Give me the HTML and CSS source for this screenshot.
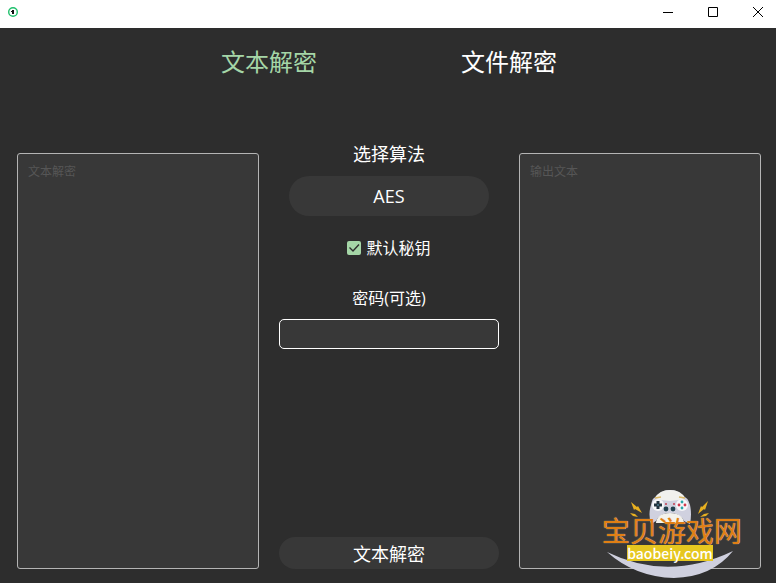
FILE: index.html
```html
<!DOCTYPE html>
<html lang="zh-CN">
<head>
    <meta charset="UTF-8">
    <meta name="viewport" content="width=device-width, initial-scale=1.0">
    <title>文本解密</title>
    <link rel="stylesheet" href="styles.css">
</head>
<body>
    <header class="titlebar">
        <svg class="app-icon" viewBox="0 0 12 12">
            <circle cx="6" cy="6" r="4.3" fill="#fff" stroke="#1fc06c" stroke-width="1.4"/>
            <path d="M5 4h2v4H5V6H4V5h1z" fill="#111"/>
        </svg>
        <div class="window-buttons">
            <button type="button" aria-label="最小化">
                <svg viewBox="0 0 12 12"><path d="M1 6.5h10"/></svg>
            </button>
            <button type="button" aria-label="最大化">
                <svg viewBox="0 0 12 12"><path d="M1.5 1.5h9v9h-9z"/></svg>
            </button>
            <button type="button" aria-label="关闭">
                <svg viewBox="0 0 12 12"><path d="M1 1l10 10M11 1L1 11"/></svg>
            </button>
        </div>
    </header>

    <nav class="tabs">
        <button type="button" class="tab active">文本解密</button>
        <button type="button" class="tab">文件解密</button>
    </nav>

    <main class="content">
        <textarea class="text-box" placeholder="文本解密" aria-label="文本解密"></textarea>

        <form class="options">
            <label class="title" for="algorithm">选择算法</label>
            <select id="algorithm" class="algorithm">
                <option>AES</option>
            </select>
            <label class="default-key">
                <input type="checkbox" checked>
                <span>默认秘钥</span>
            </label>
            <label class="password-label" for="password">密码(可选)</label>
            <input type="password" id="password" class="password">
            <button type="button" class="submit">文本解密</button>
        </form>

        <textarea class="text-box" placeholder="输出文本" aria-label="输出文本" readonly></textarea>
    </main>

    <div class="watermark">
        <svg class="watermark-art" viewBox="0 0 140 88">
            <!-- swoosh -->
            <path d="M5 62Q66 92 131 61Q110 87 72 88Q33 87 5 62z" fill="#cfd0de"/>
            <!-- sparks -->
            <g fill="#e8b020">
                <path d="M29 12l6 5 1-1 4 7-7-4-1 1z"/>
                <path d="M28 23l5 1 3 3-5-1z"/>
                <path d="M106 11l-6 6-1-1-3 8 6-5 1 1z"/>
                <path d="M107 23l-5 1-4 3 6-1z"/>
            </g>
            <!-- gamepad -->
            <path d="M49 15Q50 7 57 5Q60 0 68 0Q76 0 79 5Q86 7 88 15Q90 24 88 34L82 31Q78 23 68 23Q58 23 54 31L49 34Q46 24 49 15z" fill="#d0d1df"/>
            <path d="M53 8Q57 0 68 0Q79 0 83 8Q76 11 68 11Q60 11 53 8z" fill="#f1f1ee"/>
            <path d="M54 33Q55 23 68 23Q81 23 82 33z" fill="#f3f2ed"/>
            <path d="M53 8l6-1M77 7l6 1" stroke="#d8b765" stroke-width="1.4"/>
            <circle cx="56" cy="15" r="6" fill="#f7f7f9"/>
            <circle cx="80" cy="15" r="6" fill="#f7f7f9"/>
            <path d="M56 11v8M52 15h8" stroke="#22323e" stroke-width="3"/>
            <circle cx="56" cy="15" r="1" fill="#4a7788"/>
            <circle cx="64" cy="19" r="2.4" fill="#22424e"/>
            <circle cx="71" cy="19" r="2.4" fill="#22424e"/>
            <path d="M63 14h2M71 14h2" stroke="#c43c50" stroke-width="1.4"/>
            <g fill="#d03a4e">
                <circle cx="77" cy="15" r="1.4"/>
                <circle cx="83" cy="15" r="1.4"/>
            </g>
            <g fill="#2aa5a8">
                <circle cx="80" cy="12" r="1.4"/>
                <circle cx="80" cy="18" r="1.4"/>
            </g>
        </svg>
        <div class="watermark-name">宝贝游戏网</div>
        <div class="watermark-site">baobeiy.com</div>
    </div>
</body>
</html>
```

FILE: styles.css
```css
* {
    box-sizing: border-box;
}

body {
    margin: 0;
    height: 100vh;
    display: flex;
    flex-direction: column;
    position: relative;
    background: #2d2d2d;
    color: #fff;
    font-family: "Open Sans", "Noto Sans CJK SC", sans-serif;
}

button, input, select, textarea {
    font-family: inherit;
    color: inherit;
    margin: 0;
}

button {
    border: none;
    padding: 0;
    background: none;
    cursor: pointer;
}

.titlebar {
    display: flex;
    justify-content: space-between;
    flex: none;
    height: 28px;
    padding-left: 7px;
    background: #fff;
}

.app-icon {
    width: 12px;
    height: 12px;
    margin-top: 6px;
}

.window-buttons {
    display: flex;
    height: 24px;
    margin-right: -4px;
}

.window-buttons button {
    display: flex;
    align-items: center;
    justify-content: center;
    width: 45px;
}

.window-buttons svg {
    width: 12px;
    height: 12px;
    fill: none;
    stroke: #000;
    stroke-width: 1;
}

.tabs {
    display: grid;
    grid-template-columns: 240px 240px;
    justify-content: center;
    flex: none;
    padding: 16px 15px 0 17px;
}

.tab {
    font-size: 24px;
    line-height: 36px;
}

.tab.active {
    color: #a5d6a7;
}

.content {
    flex: 1;
    display: grid;
    grid-template-columns: 1fr 220px 1fr;
    gap: 20px;
    min-height: 0;
    padding: 60px 15px 14px 17px;
}

.text-box {
    width: 100%;
    margin-top: 13px;
    padding: 9px 10px;
    border: 1px solid #b4b4b4;
    border-radius: 3px;
    background: #383838;
    font-size: 12px;
    line-height: 18px;
    resize: none;
    outline: none;
}

.text-box::placeholder {
    color: #565656;
    opacity: 1;
}

.options {
    display: flex;
    flex-direction: column;
    align-items: center;
}

.title {
    font-size: 18px;
    line-height: 28px;
}

.algorithm {
    appearance: none;
    width: 200px;
    height: 40px;
    margin-top: 8px;
    padding: 0;
    border: none;
    border-radius: 20px;
    background: #383838;
    font-size: 18px;
    text-align: center;
    text-align-last: center;
}

.default-key {
    display: flex;
    align-items: center;
    gap: 5px;
    margin-top: 20px;
    font-size: 16px;
    line-height: 24px;
}

.default-key input {
    appearance: none;
    width: 14px;
    height: 14px;
    border-radius: 2px;
    background: #a5d6a7 url("data:image/svg+xml,%3Csvg xmlns='http://www.w3.org/2000/svg' viewBox='0 0 14 14'%3E%3Cpath d='M2.5 6.5l3.5 3.5 6-6.5' fill='none' stroke='%232d2d2d' stroke-width='1.4'/%3E%3C/svg%3E");
}

.password-label {
    margin-top: 26px;
    font-size: 16px;
    line-height: 24px;
}

.password {
    width: 100%;
    height: 30px;
    margin-top: 9px;
    padding: 0 8px;
    border: 1px solid #fff;
    border-radius: 5px;
    background: #383838;
    font-size: 14px;
    outline: none;
}

.submit {
    width: 100%;
    height: 32px;
    margin-top: auto;
    border-radius: 16px;
    background: #383838;
    font-size: 18px;
}

/* site logo over the lower right corner */
.watermark {
    position: absolute;
    right: 34px;
    bottom: 5px;
    width: 140px;
    height: 88px;
    padding-top: 27px;
    text-align: center;
    pointer-events: none;
}

.watermark-art {
    position: absolute;
    top: 0;
    left: 0;
    width: 140px;
    height: 88px;
}

.watermark-name {
    position: relative;
    color: #e07f14;
    font-size: 28px;
    line-height: 28px;
    white-space: nowrap;
    text-shadow: 0 0 1px #f5d9b0;
}

.watermark-site {
    position: relative;
    width: 86px;
    margin-left: 25px;
    background: #e6c71f;
    font-family: "Noto Sans CJK SC", sans-serif;
    font-size: 14px;
    line-height: 16px;
    font-weight: 500;
}
```
